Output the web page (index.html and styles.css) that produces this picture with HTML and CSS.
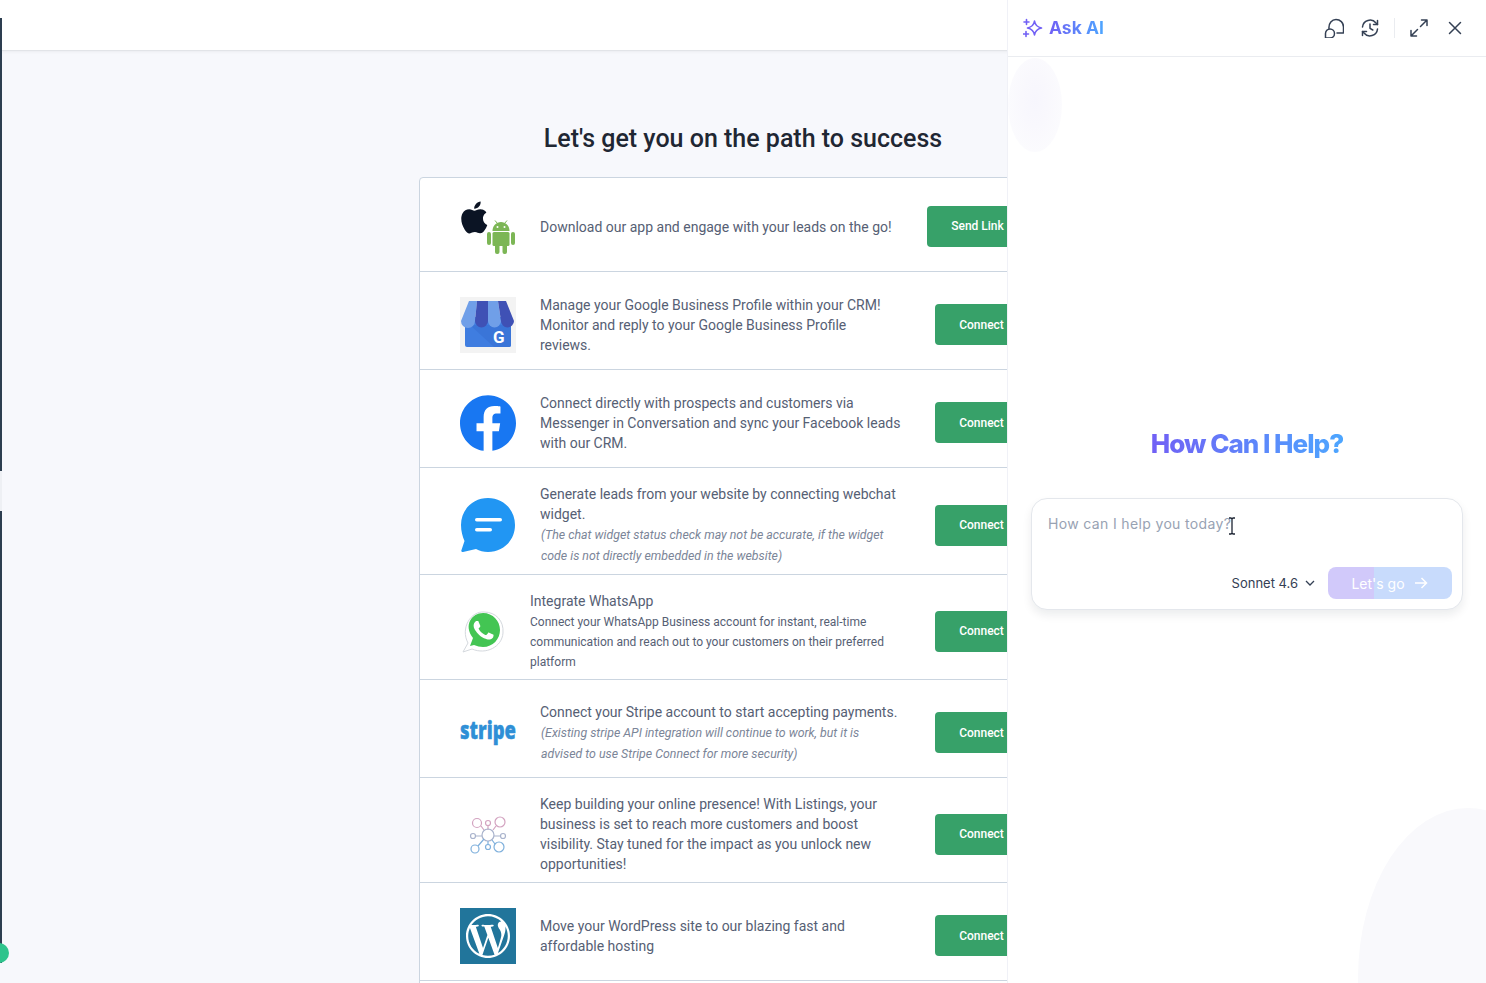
FILE: index.html
```html
<!DOCTYPE html>
<html lang="en">
<head>
  <meta charset="UTF-8">
  <title>Integrations</title>
  <link rel="stylesheet" href="styles.css">
</head>
<body>

<div class="edge-strip"></div>
<div class="edge-gap"></div>
<div class="edge-dot"></div>

<header class="topbar"></header>

<main class="main">
  <h1 class="title">Let's get you on the path to success</h1>

  <section class="card">

    <div class="row row-short">
      <svg class="logo" viewBox="0 0 56 56">
        <g transform="translate(-1.7 2.5) scale(1.33)"><path fill="#0b1424" d="M12.152 6.896c-.948 0-2.415-1.078-3.96-1.04-2.04.027-3.91 1.183-4.961 3.014-2.117 3.675-.546 9.103 1.519 12.09 1.013 1.454 2.208 3.09 3.792 3.039 1.52-.065 2.09-.987 3.935-.987 1.831 0 2.35.987 3.96.948 1.637-.026 2.676-1.48 3.676-2.948 1.156-1.688 1.636-3.325 1.662-3.415-.039-.013-3.182-1.221-3.22-4.857-.026-3.04 2.48-4.494 2.597-4.559-1.429-2.09-3.623-2.324-4.39-2.376-2-.156-3.675 1.09-4.61 1.09zM15.53 3.83c.843-1.012 1.4-2.427 1.245-3.83-1.207.052-2.662.805-3.532 1.818-.78.896-1.454 2.338-1.273 3.714 1.338.104 2.715-.688 3.559-1.701"/></g>
        <g fill="#7cb655">
          <path d="M32.5 32c0-5.500 4-9 8.500-9s8.500 3.500 8.500 9z"/>
          <rect x="32.5" y="33" width="17" height="14" rx="1.5"/>
          <rect x="27" y="33" width="4" height="13" rx="2"/>
          <rect x="51" y="33" width="4" height="13" rx="2"/>
          <rect x="35" y="45" width="4.5" height="10" rx="2"/>
          <rect x="42.5" y="45" width="4.5" height="10" rx="2"/>
          <path d="M35 21.5l2.5 3M47 21.5l-2.500 3" stroke="#7cb655" stroke-width="1"/>
        </g>
        <circle cx="37.5" cy="28" r="1" fill="#fff"/>
        <circle cx="44.5" cy="28" r="1" fill="#fff"/>
      </svg>
      <p class="text">Download our app and engage with your leads on the go!</p>
      <button class="btn btn-wide">Send Link</button>
    </div>

    <div class="row">
      <svg class="logo" viewBox="0 0 56 56">
        <rect width="56" height="56" fill="#f3f3f3"/>
        <rect x="5" y="20" width="46" height="30" rx="2" fill="#3f7de0"/>
        <path d="M10 28l24 22h15a2 2 0 0 0 2-2V28z" fill="#3a75d8"/>
        <path d="M9 4h8l-2 20a7 7 0 0 1-14 0z" fill="#709fe8"/>
        <path d="M17 4h11v20a6.5 6.5 0 0 1-13 0z" fill="#3f51b5"/>
        <path d="M28 4h10l3 20a6.5 6.5 0 0 1-13 0z" fill="#709fe8"/>
        <path d="M38 4h8l8 20a6.5 6.5 0 0 1-13 0z" fill="#3f51b5"/>
        <text class="g-letter" x="33" y="46">G</text>
      </svg>
      <p class="text">Manage your Google Business Profile within your CRM! Monitor and reply to your Google Business Profile<br>reviews.</p>
      <button class="btn">Connect</button>
    </div>

    <div class="row">
      <svg class="logo" viewBox="0 0 24 24">
        <circle cx="12" cy="12" r="11.5" fill="#fff"/>
        <path fill="#1877f2" d="M24 12.073c0-6.627-5.373-12-12-12s-12 5.373-12 12c0 5.990 4.388 10.954 10.125 11.854v-8.385H7.078v-3.470h3.047V9.430c0-3.007 1.792-4.669 4.533-4.669 1.312 0 2.686.235 2.686.235v2.953H15.830c-1.491 0-1.956.925-1.956 1.874v2.250h3.328l-.532 3.470h-2.796v8.385C19.612 23.027 24 18.062 24 12.073z"/>
      </svg>
      <p class="text">Connect directly with prospects and customers via Messenger in Conversation and sync your Facebook leads with our CRM.</p>
      <button class="btn">Connect</button>
    </div>

    <div class="row">
      <svg class="logo" viewBox="0 0 56 56">
        <path fill="#2196f3" d="M28 1c15 0 27 11.500 27 27S43 55 28 55c-4.500 0-8.500-1-12-3l-13 3c-1.500 0-2-1-1.500-2l3-9C2.500 39.500 1 34 1 28 1 12.500 13 1 28 1z"/>
        <rect x="15" y="21" width="27" height="3.5" rx="1.75" fill="#fff"/>
        <rect x="15" y="31" width="17" height="3.5" rx="1.75" fill="#fff"/>
      </svg>
      <div class="text">
        <p>Generate leads from your website by connecting webchat widget.</p>
        <p class="note">(The chat widget status check may not be accurate, if the widget code is not directly embedded in the website)</p>
      </div>
      <button class="btn">Connect</button>
    </div>

    <div class="row row-tight">
      <svg class="logo" viewBox="0 0 56 56">
        <path fill="#fff" stroke="#d5d9de" stroke-width="1" d="M3 49l5-9C0 25 11 8 24 9c12 0 20 9 19 21-1 14-17 22-31 16z"/>
        <path fill="#43c553" d="M10 43l3-8C3 22 12 10 23 10c10 0 17 8 17 17s-7 17-17 17c-3 0-6-1-9-2z"/>
        <g transform="translate(3.7 7.5) scale(1.65)"><path fill="#fff" d="M17.472 14.382c-.297-.149-1.758-.867-2.030-.967-.273-.099-.471-.148-.670.150-.197.297-.767.966-.940 1.164-.173.199-.347.223-.644.075-.297-.150-1.255-.463-2.390-1.475-.883-.788-1.480-1.761-1.653-2.059-.173-.297-.018-.458.130-.606.134-.133.298-.347.446-.520.149-.174.198-.298.298-.497.099-.198.050-.371-.025-.520-.075-.149-.669-1.612-.916-2.207-.242-.579-.487-.500-.669-.510-.173-.008-.371-.010-.570-.010-.198 0-.520.074-.792.372-.272.297-1.040 1.016-1.040 2.479 0 1.462 1.065 2.875 1.213 3.074.149.198 2.096 3.200 5.077 4.487.709.306 1.262.489 1.694.625.712.227 1.360.195 1.871.118.571-.085 1.758-.719 2.006-1.413.248-.694.248-1.289.173-1.413-.074-.124-.272-.198-.570-.347"/></g>
      </svg>
      <div class="text">
        <p>Integrate WhatsApp</p>
        <p class="small">Connect your WhatsApp Business account for instant, real-time communication and reach out to your customers on their preferred platform</p>
      </div>
      <button class="btn">Connect</button>
    </div>

    <div class="row">
      <svg class="logo logo-stripe" viewBox="0 0 56 26">
        <text class="stripe-word" x="0" y="19" textLength="56" lengthAdjust="spacingAndGlyphs">stripe</text>
      </svg>
      <div class="text">
        <p>Connect your Stripe account to start accepting payments.</p>
        <p class="note">(Existing stripe API integration will continue to work, but it is advised to use Stripe Connect for more security)</p>
      </div>
      <button class="btn">Connect</button>
    </div>

    <div class="row">
      <svg class="logo" viewBox="0 0 56 56">
        <g fill="none" stroke-width="1.2">
          <g stroke="#d3a3c0">
            <circle cx="17" cy="17" r="4.5"/><circle cx="28" cy="17" r="2.5"/><circle cx="40" cy="16" r="5"/>
            <path d="M21 20l3 4M28 19.5V24M36 20l-3 4"/>
          </g>
          <g stroke="#a9b3cc">
            <circle cx="28" cy="29" r="6"/><circle cx="13" cy="30" r="2.5"/><circle cx="43" cy="30" r="2.5"/>
            <path d="M15.5 30H22M34 30h6.5"/>
          </g>
          <g stroke="#7fb0dc">
            <circle cx="15" cy="43" r="4"/><circle cx="28" cy="41" r="2.5"/><circle cx="39" cy="41" r="5"/>
            <path d="M18 40l6-7M28 35v3.5M35 38l-3-4"/>
          </g>
        </g>
      </svg>
      <p class="text">Keep building your online presence! With Listings, your business is set to reach more customers and boost visibility. Stay tuned for the impact as you unlock new opportunities!</p>
      <button class="btn">Connect</button>
    </div>

    <div class="row">
      <svg class="logo" viewBox="0 0 56 56">
        <rect width="56" height="56" fill="#21759b"/>
        <g transform="translate(6 6) scale(1.833)"><path fill="#fff" d="M21.469 6.825c.840 1.537 1.318 3.300 1.318 5.175 0 3.979-2.156 7.456-5.363 9.325l3.295-9.527c.615-1.540.820-2.771.820-3.864 0-.405-.026-.780-.070-1.110m-7.981.105c.647-.030 1.232-.105 1.232-.105.582-.075.514-.930-.067-.899 0 0-1.755.135-2.880.135-1.064 0-2.850-.150-2.850-.150-.585-.030-.661.855-.075.885 0 0 .540.061 1.125.090l1.680 4.605-2.370 7.080L5.354 6.900c.649-.030 1.234-.100 1.234-.100.585-.075.516-.930-.065-.896 0 0-1.746.138-2.874.138-.200 0-.438-.008-.690-.015C4.911 3.150 8.235 1.215 12 1.215c2.809 0 5.365 1.072 7.286 2.833-.046-.003-.091-.009-.141-.009-1.060 0-1.812.923-1.812 1.914 0 .890.513 1.643 1.060 2.531.411.720.890 1.643.890 2.977 0 .915-.354 1.994-.821 3.479l-1.075 3.585-3.900-11.610.001.014zM12 22.784c-1.059 0-2.081-.153-3.048-.437l3.237-9.406 3.315 9.087c.024.053.050.101.078.149-1.120.393-2.325.609-3.582.609M1.211 12c0-1.564.336-3.050.935-4.390L7.290 21.709C3.694 19.960 1.212 16.271 1.211 12M12 0C5.385 0 0 5.385 0 12s5.385 12 12 12 12-5.385 12-12S18.615 0 12 0"/></g>
      </svg>
      <p class="text">Move your WordPress site to our blazing fast and affordable hosting</p>
      <button class="btn">Connect</button>
    </div>

  </section>
</main>

<aside class="panel">
  <div class="blob blob-top"></div>
  <div class="blob blob-bottom"></div>

  <div class="panel-head">
    <div class="brand">
      <svg class="sparkle" viewBox="0 0 20 20" fill="none" stroke="#7160f5" stroke-width="1.6" stroke-linejoin="round" stroke-linecap="round">
        <path d="M11.5 3c.6 4 2.500 6 7 7-4.500 1-6.400 3-7 7-.6-4-2.500-6-7-7 4.500-1 6.400-3 7-7z"/>
        <path d="M3.500 1.500v5M1 4h5M3 13.500v5M.5 16h5"/>
      </svg>
      <span class="brand-name">Ask AI</span>
    </div>
    <div class="tools">
      <svg class="tool" viewBox="0 0 20 20">
        <path d="M5 10.500C4.500 5 8 1.500 12 1.500c4.200 0 7.500 3.200 7.500 7.500v6H13"/>
        <path d="M6 11a4.500 4.500 0 0 1 0 9H1.500v-4.500A4.500 4.500 0 0 1 6 11z"/>
      </svg>
      <svg class="tool" viewBox="0 0 20 20">
        <path d="M2.500 9a7.600 7.600 0 0 1 13.500-4l1.500 1.500M17.500 11a7.600 7.600 0 0 1-13.500 4l-1.500-1.500"/>
        <path d="M17.500 2.500v4h-4M2.500 17.500v-4h4"/>
        <path d="M10 6v4.300l2.800 1.700"/>
      </svg>
      <span class="tool-sep"></span>
      <svg class="tool" viewBox="0 0 20 20">
        <path d="M11.500 8.500L18 2M12.500 2H18v5.500M8.500 11.500L2 18M2 12.500V18h5.500"/>
      </svg>
      <svg class="tool" viewBox="0 0 20 20">
        <path d="M4.500 4.500l11 11M15.500 4.500l-11 11"/>
      </svg>
    </div>
  </div>

  <div class="panel-body">
    <h2 class="help">How Can I Help?</h2>
    <div class="askbox">
      <div class="ask-input">How can I help you today?</div>
      <div class="ask-foot">
        <span class="model">Sonnet 4.6
          <svg class="chev" viewBox="0 0 12 12"><path d="M2 4l4 4 4-4"/></svg>
        </span>
        <button class="go">Let's go
          <svg class="go-arrow" viewBox="0 0 16 16"><path d="M2 8h11.500M8.500 3l5 5-5 5"/></svg>
        </button>
      </div>
      <svg class="ibeam" viewBox="0 0 8 18"><path d="M1 1h2l1 1 1-1h2M4 2v14M1 17h2l1-1 1 1h2"/></svg>
    </div>
  </div>
</aside>

</body>
</html>
```

FILE: styles.css
```css
* {
  box-sizing: border-box;
}

body {
  margin: 0;
  height: 100vh;
  overflow: hidden;
  background-color: #f7f8fc;
  font-family: Roboto, "Liberation Sans", sans-serif;
  position: relative;
}

p {
  margin: 0;
}

/* left edge, the rest of the sidebar is off screen */
.edge-strip {
  position: absolute;
  left: 0;
  top: 18px;
  width: 2px;
  height: 945px;
  background-color: #2d3e50;
  z-index: 3;
}

.edge-gap {
  position: absolute;
  left: 0;
  top: 471px;
  width: 2px;
  height: 40px;
  background-color: #eef0f4;
  z-index: 3;
}

.edge-dot {
  position: absolute;
  left: -11px;
  top: 943px;
  width: 20px;
  height: 20px;
  border-radius: 50%;
  background-color: #2fc48d;
  z-index: 4;
}

.topbar {
  height: 51px;
  background-color: #fff;
  border-bottom: 1px solid #e2e4e8;
  box-shadow: 0 1px 3px rgba(0, 0, 0, 0.05);
}

.main {
  display: flex;
  flex-direction: column;
  align-items: center;
  padding-top: 73px;
}

.title {
  margin: 0 0 23px 0;
  font-size: 25px;
  line-height: 30px;
  font-weight: 500;
  color: #1f2733;
}

.card {
  width: 648px;
  height: 900px;
  overflow: hidden;
  background-color: #fff;
  border: 1px solid #cbd5e0;
  border-radius: 4px;
}

.row {
  display: flex;
  align-items: center;
  min-height: 98px;
  padding: 16px 38px 8px 40px;
  border-bottom: 1px solid #cbd5e0;
}

.row-short {
  min-height: 94px;
  padding-top: 13px;
}

.row-short .btn {
  margin-bottom: 2px;
}

.logo {
  flex: none;
  width: 56px;
  height: 56px;
}

.logo-stripe {
  height: 26px;
  overflow: visible;
}

.g-letter {
  font-family: Roboto, sans-serif;
  font-weight: 700;
  font-size: 17px;
  fill: #fff;
}

.stripe-word {
  font-family: "Open Sans", sans-serif;
  font-weight: 800;
  font-size: 24px;
  fill: #2f8fd6;
  stroke: #2f8fd6;
  stroke-width: 0.4;
}

.text {
  width: 362px;
  margin: 0 auto 0 24px;
  font-size: 14px;
  line-height: 20px;
  color: #566074;
}

.row-tight .text {
  margin-left: 14px;
  width: 375px;
}

.note {
  margin: 1px 0 -1px 1px;
  font-size: 12.35px;
  line-height: 21px;
  font-style: italic;
  color: #7b8598;
}

.small {
  margin: 1px 0 -1px 0;
  font-size: 12px;
  line-height: 20px;
}

.btn {
  flex: none;
  width: 93px;
  height: 41px;
  padding: 0;
  border: none;
  border-radius: 4px;
  background-color: #37a169;
  color: #fff;
  font-family: Roboto, sans-serif;
  font-size: 12px;
  font-weight: 500;
  text-align: center;
}

.btn-wide {
  width: 101px;
}

/* chat panel sits over the page */
.panel {
  position: absolute;
  left: 1007px;
  top: 0;
  width: 479px;
  height: 100%;
  background-color: #fff;
  border-left: 1px solid #f0f1f7;
  font-family: Inter, "Liberation Sans", sans-serif;
  overflow: hidden;
  z-index: 2;
}

.blob {
  position: absolute;
}

.blob-top {
  left: 0;
  top: 58px;
  width: 54px;
  height: 94px;
  border-radius: 50%;
  background: radial-gradient(ellipse at 50% 45%, #f7f6fd 0, #f9f8fd 35%, #fcfcfe 85%, #fff 100%);
}

.blob-bottom {
  left: 350px;
  top: 808px;
  width: 220px;
  height: 340px;
  border-radius: 50%;
  background-color: #f9f9fc;
}

.panel-head {
  position: relative;
  display: flex;
  align-items: center;
  justify-content: space-between;
  height: 57px;
  padding: 0 21px 1px 15px;
  border-bottom: 1px solid #eaecf0;
}

.brand {
  display: flex;
  align-items: center;
  gap: 6px;
}

.sparkle {
  width: 20px;
  height: 20px;
}

.brand-name {
  font-size: 17.5px;
  font-weight: 700;
  background: linear-gradient(90deg, #7160f5 0%, #4da6ff 100%);
  -webkit-background-clip: text;
  background-clip: text;
  color: transparent;
}

.tools {
  display: flex;
  align-items: center;
}

.tool {
  width: 20px;
  height: 20px;
  margin-left: 16px;
  fill: none;
  stroke: #344054;
  stroke-width: 1.5;
  stroke-linecap: round;
  stroke-linejoin: round;
}

.tool-sep {
  width: 1px;
  height: 20px;
  margin-left: 14px;
  margin-right: -2px;
  background-color: #eaecf0;
}

.panel-body {
  position: relative;
  display: flex;
  flex-direction: column;
  align-items: center;
  padding-top: 370px;
}

.help {
  margin: 0 0 37px 0;
  font-size: 26px;
  line-height: 34px;
  font-weight: 800;
  letter-spacing: -1px;
  background: linear-gradient(90deg, #7160f5 0%, #4da6ff 100%);
  -webkit-background-clip: text;
  background-clip: text;
  color: transparent;
}

.askbox {
  position: relative;
  width: 432px;
  height: 112px;
  padding: 15px 10px 10px 16px;
  background-color: #fff;
  border: 1px solid #e4e7ec;
  border-radius: 16px;
  box-shadow: 0 5px 10px rgba(16, 24, 40, 0.08);
}

.ask-input {
  font-size: 14px;
  line-height: 20px;
  letter-spacing: 0.35px;
  color: #98a2b3;
}

.ask-foot {
  display: flex;
  align-items: center;
  justify-content: flex-end;
  margin-top: 33px;
  gap: 12px;
}

.model {
  display: flex;
  align-items: center;
  gap: 6px;
  font-size: 13px;
  color: #344054;
}

.chev {
  width: 12px;
  height: 12px;
  fill: none;
  stroke: #344054;
  stroke-width: 1.3;
}

.go {
  display: flex;
  align-items: center;
  justify-content: center;
  gap: 8px;
  width: 124px;
  height: 32px;
  border: none;
  border-radius: 8px;
  background: linear-gradient(90deg, #d1c9fa 37%, #c8dbfc 37%);
  color: #fff;
  font-family: Inter, sans-serif;
  font-size: 14px;
}

.go-arrow {
  width: 16px;
  height: 16px;
  fill: none;
  stroke: #fff;
  stroke-width: 1.5;
}

.ibeam {
  position: absolute;
  left: 196px;
  top: 18px;
  width: 8px;
  height: 18px;
  fill: none;
  stroke: #1d2433;
  stroke-width: 1.3;
}
```
